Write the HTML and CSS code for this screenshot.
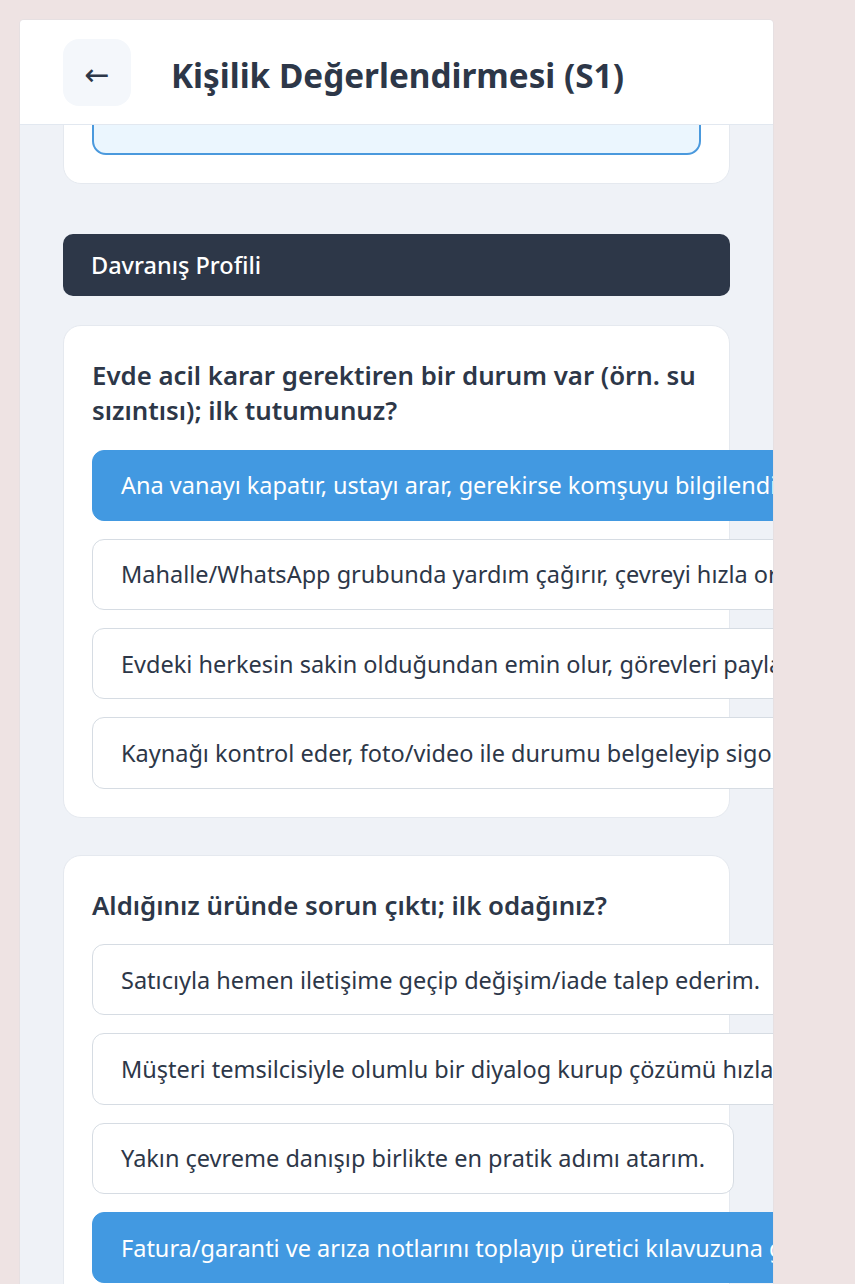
FILE: index.html
```html
<!DOCTYPE html>
<html lang="tr">
<head>
<meta charset="utf-8">
<title>Kişilik Değerlendirmesi (S1)</title>
<link rel="stylesheet" href="styles.css">
</head>
<body>
<div class="app">
  <header class="topbar">
    <button class="back" type="button" aria-label="Geri">←</button>
    <h1 class="title">Kişilik Değerlendirmesi (S1)</h1>
  </header>
  <main class="scroll">
    <div class="scroll-inner">
      <section class="card card-top">
        <div class="note-box"></div>
      </section>

      <div class="section-head">Davranış Profili</div>

      <section class="card">
        <h2 class="question">Evde acil karar gerektiren bir durum var (örn. su sızıntısı); ilk tutumunuz?</h2>
        <div class="options">
          <div class="option selected">Ana vanayı kapatır, ustayı arar, gerekirse komşuyu bilgilendiririm.</div>
          <div class="option">Mahalle/WhatsApp grubunda yardım çağırır, çevreyi hızla organize ederim.</div>
          <div class="option">Evdeki herkesin sakin olduğundan emin olur, görevleri paylaştırırım.</div>
          <div class="option">Kaynağı kontrol eder, foto/video ile durumu belgeleyip sigortaya bildiririm.</div>
        </div>
      </section>

      <section class="card">
        <h2 class="question">Aldığınız üründe sorun çıktı; ilk odağınız?</h2>
        <div class="options">
          <div class="option">Satıcıyla hemen iletişime geçip değişim/iade talep ederim.</div>
          <div class="option">Müşteri temsilcisiyle olumlu bir diyalog kurup çözümü hızlandırırım.</div>
          <div class="option">Yakın çevreme danışıp birlikte en pratik adımı atarım.</div>
          <div class="option selected">Fatura/garanti ve arıza notlarını toplayıp üretici kılavuzuna göre ilerlerim.</div>
        </div>
      </section>
    </div>
  </main>
</div>
</body>
</html>
```

FILE: styles.css
```css
* { box-sizing: border-box; }

html, body {
  margin: 0;
  padding: 0;
}

body {
  background: #eee3e3;
  font-family: "Noto Sans", "Open Sans", sans-serif;
  color: #2d3748;
  padding: 20px 0 0 20px;
  height: 1284px;
  overflow: hidden;
}

.app {
  width: 753px;
  height: 1264px;
  background: #eff2f7;
  border-radius: 4px 4px 0 0;
  overflow: hidden;
  display: flex;
  flex-direction: column;
  box-shadow: 0 0 0 1px #e6e0e2;
}

.topbar {
  flex: 0 0 105px;
  background: #ffffff;
  border-bottom: 1px solid #e2e8f0;
  display: flex;
  align-items: center;
  padding-left: 43px;
  gap: 40px;
  position: relative;
  z-index: 2;
}

.back {
  width: 68px;
  height: 67px;
  border: none;
  border-radius: 16px;
  background: #f4f7fb;
  color: #2d3748;
  font-family: "DejaVu Sans", sans-serif;
  font-size: 30px;
  line-height: 1;
  padding: 6px 0 0;
  display: flex;
  align-items: center;
  justify-content: center;
}

.title {
  margin: 0;
  padding-top: 6px;
  font-size: 33.3px;
  font-weight: 700;
  color: #2d3748;
}

.scroll {
  flex: 1;
  overflow: hidden;
}

.scroll-inner {
  margin-top: -117px;
  padding: 0 43px;
}

.card {
  background: #ffffff;
  border: 1px solid #e5e9ef;
  border-radius: 18px;
  padding: 32px 28px 28px;
  margin-bottom: 37px;
}

.card-top {
  padding-top: 28px;
  margin-bottom: 50px;
}

.note-box {
  height: 118px;
  background: #ebf6fe;
  border: 2px solid #4a99dd;
  border-radius: 14px;
}

.section-head {
  background: #2d3748;
  color: #ffffff;
  border-radius: 10px;
  height: 62px;
  display: flex;
  align-items: center;
  padding: 0 28px;
  font-size: 23.5px;
  font-weight: 500;
  margin-bottom: 29px;
}

.question {
  margin: 0 0 21.5px;
  font-size: 25.8px;
  line-height: 35px;
  font-weight: 600;
  color: #2d3748;
}

.options {
  display: flex;
  flex-direction: column;
  align-items: flex-start;
  gap: 18px;
}

.option {
  width: max-content;
  min-width: 100%;
  height: 71.3px;
  white-space: nowrap;
  background: #ffffff;
  border: 1px solid #d6dce3;
  border-radius: 12px;
  padding: 21.6px 28px 0;
  font-size: 23.5px;
  line-height: 26px;
  color: #2d3748;
}

.option.selected {
  background: #4299e1;
  border-color: #4299e1;
  color: #ffffff;
}
```
